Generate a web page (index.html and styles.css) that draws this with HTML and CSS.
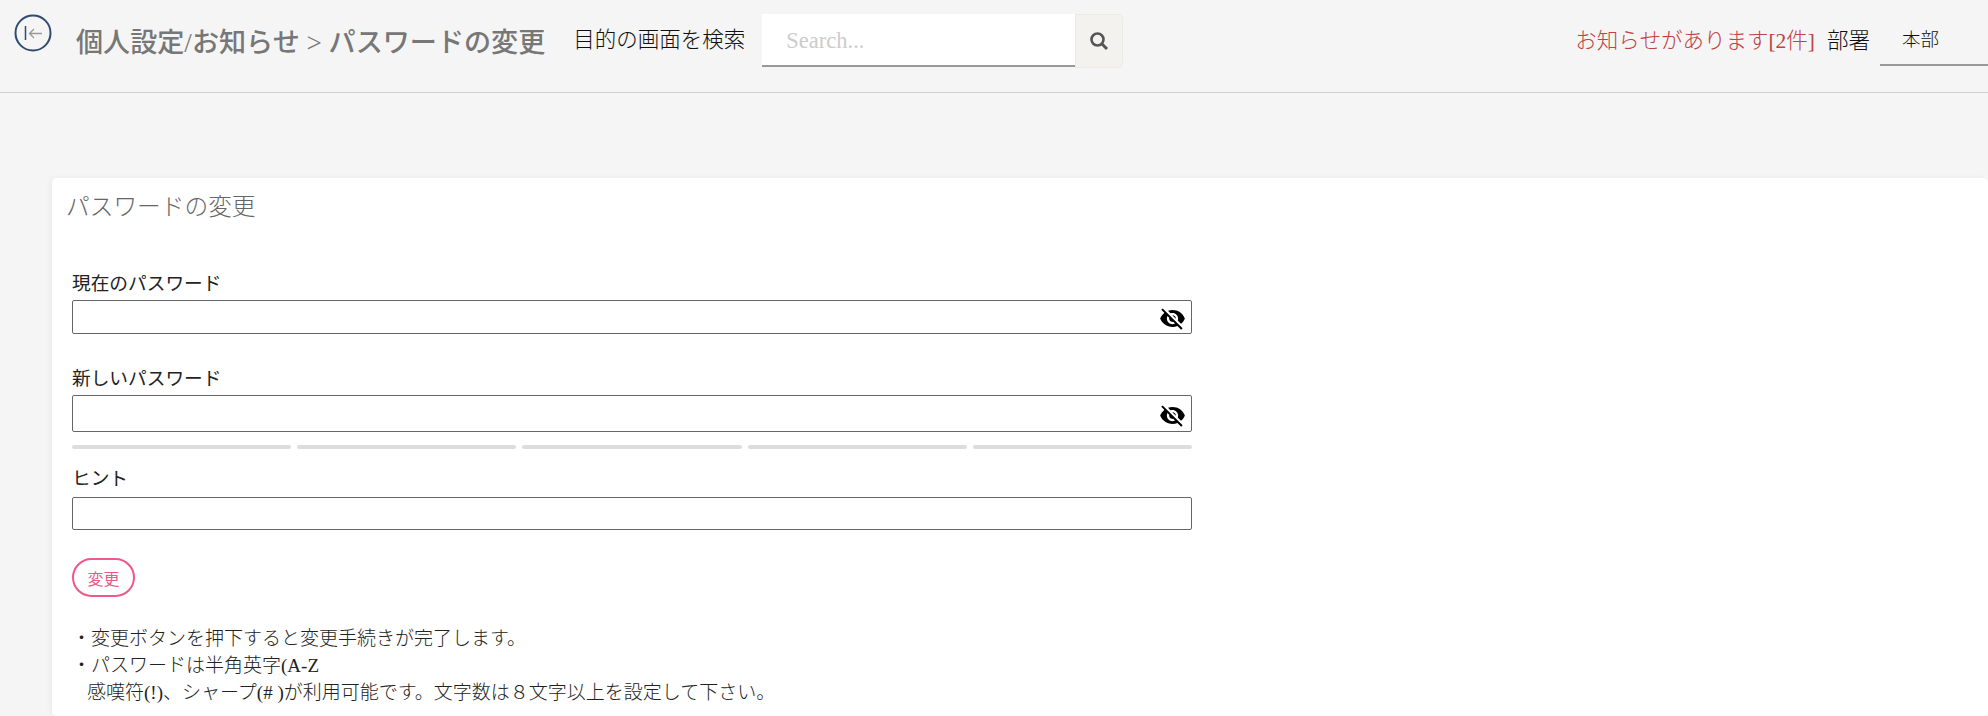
FILE: index.html
```html
<!DOCTYPE html>
<html lang="ja">
<head>
    <meta charset="UTF-8">
    <title>パスワードの変更</title>
    <link rel="stylesheet" href="styles.css">
</head>
<body>
<header class="topbar">
    <a class="back-btn" href="#">
        <svg width="38" height="38" viewBox="0 0 38 38">
            <circle cx="19" cy="19" r="17.5" fill="none" stroke="#2f4b70" stroke-width="2"/>
            <path d="M11.5 12v14" fill="none" stroke="#2f4b70" stroke-width="1.5"/>
            <path d="M28 19.500H15.500M20 15l-4.500 4.500 4.500 4.500" fill="none" stroke="#9a9a9a" stroke-width="1.300"/>
        </svg>
    </a>
    <div class="page-title">個人設定/お知らせ &gt; パスワードの変更</div>
    <div class="search-label">目的の画面を検索</div>
    <div class="search-box">
        <input class="search-input" type="text" placeholder="Search...">
        <button class="search-btn" type="button">
            <svg width="20" height="20" viewBox="0 0 20 20">
                <circle cx="8.500" cy="8.500" r="6" fill="none" stroke="#555" stroke-width="2.600"/>
                <path d="M13 13l5 5" fill="none" stroke="#555" stroke-width="3"/>
            </svg>
        </button>
    </div>
    <div class="topbar-right">
        <span class="notice">お知らせがあります[2件]</span>
        <span class="dept-label">部署</span>
        <div class="dept-select">本部</div>
    </div>
</header>
<main class="card">
    <h2 class="card-title">パスワードの変更</h2>
    <form class="pw-form">
        <label class="field-label">現在のパスワード</label>
        <div class="input-wrap">
            <input class="field h34" type="password">
            <svg class="eye" viewBox="0 0 24 24"><path d="M12 7c2.760 0 5 2.240 5 5 0 .65-.13 1.260-.36 1.830l2.920 2.920c1.510-1.260 2.700-2.890 3.430-4.750-1.730-4.390-6-7.500-11-7.500-1.400 0-2.740.25-3.980.7l2.160 2.160C10.740 7.130 11.350 7 12 7zM2 4.270l2.280 2.280.46.46C3.080 8.300 1.780 10.020 1 12c1.730 4.390 6 7.500 11 7.500 1.550 0 3.030-.3 4.380-.84l.42.42L19.730 22 21 20.730 3.270 3 2 4.270zM7.530 9.800l1.550 1.550c-.05.21-.08.43-.08.65 0 1.660 1.340 3 3 3 .22 0 .44-.03.65-.08l1.550 1.550c-.67.33-1.410.53-2.200.53-2.760 0-5-2.240-5-5 0-.79.2-1.530.53-2.200zm4.310-.78l3.150 3.150.02-.16c0-1.660-1.340-3-3-3l-.17.01z"/></svg>
        </div>
        <label class="field-label second">新しいパスワード</label>
        <div class="input-wrap">
            <input class="field h37" type="password">
            <svg class="eye" viewBox="0 0 24 24"><path d="M12 7c2.760 0 5 2.240 5 5 0 .65-.13 1.260-.36 1.830l2.920 2.920c1.510-1.260 2.700-2.890 3.430-4.750-1.730-4.390-6-7.500-11-7.500-1.400 0-2.740.25-3.980.7l2.160 2.160C10.740 7.130 11.350 7 12 7zM2 4.270l2.280 2.280.46.46C3.080 8.300 1.780 10.020 1 12c1.730 4.390 6 7.500 11 7.500 1.550 0 3.030-.3 4.380-.84l.42.42L19.730 22 21 20.730 3.270 3 2 4.270zM7.530 9.800l1.550 1.550c-.05.21-.08.43-.08.65 0 1.660 1.340 3 3 3 .22 0 .44-.03.65-.08l1.550 1.550c-.67.33-1.410.53-2.200.53-2.760 0-5-2.240-5-5 0-.79.2-1.530.53-2.200zm4.310-.78l3.150 3.150.02-.16c0-1.660-1.340-3-3-3l-.17.01z"/></svg>
        </div>
        <div class="strength">
            <span></span><span></span><span></span><span></span><span></span>
        </div>
        <label class="field-label third">ヒント</label>
        <input class="field h33" type="text">
        <button class="change-btn" type="button">変更</button>
    </form>
    <div class="notes">
        <p>・変更ボタンを押下すると変更手続きが完了します。</p>
        <p>・パスワードは半角英字(A-Z</p>
        <p class="indent">感嘆符(!)、シャープ(# )が利用可能です。文字数は８文字以上を設定して下さい。</p>
    </div>
</main>
</body>
</html>
```

FILE: styles.css
```css
/* General Styles */
html, body {
    height: 100%;
}

body {
    font-family: "Liberation Serif", "Noto Sans CJK JP", serif;
    font-weight: 300;
    margin: 0;
    background-color: #f5f5f5;
    color: #111;
    display: flex;
    flex-direction: column;
    overflow: hidden;
}

/* Top bar */
.topbar {
    height: 92px;
    flex-shrink: 0;
    display: flex;
    align-items: flex-start;
    border-bottom: 1px solid #cfcfcf;
    box-sizing: content-box;
}

.back-btn {
    display: block;
    width: 38px;
    height: 38px;
    margin: 14px 0 0 14px;
}

.page-title {
    margin: 23px 0 0 24px;
    font-size: 27.100px;
    font-weight: 500;
    line-height: 40px;
    color: #777;
    white-space: nowrap;
}

.search-label {
    margin: 20px 0 0 28px;
    font-size: 21.500px;
    line-height: 40px;
    color: #111;
}

.search-box {
    display: flex;
    margin: 14px 0 0 17px;
}

.search-input {
    width: 313px;
    height: 53px;
    box-sizing: border-box;
    padding: 2px 24px 0;
    border: none;
    border-bottom: 2px solid #999;
    background: #fff;
    font-family: inherit;
    font-size: 22.500px;
    outline: none;
}

.search-input::placeholder {
    color: #ccc;
}

.search-btn {
    width: 48px;
    height: 54px;
    padding: 0;
    border: 1px solid #ebebe6;
    border-radius: 0 5px 5px 0;
    background-color: #f3f2ee;
    display: flex;
    align-items: center;
    justify-content: center;
}

.topbar-right {
    margin-left: auto;
    display: flex;
    align-items: flex-start;
}

.notice {
    margin-top: 21px;
    font-size: 21.500px;
    line-height: 40px;
    color: #bf4245;
}

.dept-label {
    margin: 21px 0 0 12px;
    font-size: 21.500px;
    line-height: 40px;
}

.dept-select {
    width: 108px;
    height: 53px;
    margin: 13px 0 0 10px;
    box-sizing: border-box;
    padding: 12px 0 0 22px;
    border-bottom: 2px solid #999;
    font-size: 18.500px;
    line-height: 30px;
}

/* Card */
.card {
    flex: 1;
    margin: 85px 0 0 52px;
    padding: 0 0 0 20px;
    background: #fff;
    border-radius: 5px;
    box-shadow: -2px 0 6px rgba(0, 0, 0, 0.04);
}

.card-title {
    margin: 11px 0 0 -6px;
    font-size: 23.700px;
    font-weight: 300;
    line-height: 36px;
    color: #666;
}

.pw-form {
    width: 1120px;
    display: flex;
    flex-direction: column;
}

.field-label {
    display: block;
    margin-top: 43px;
    font-size: 18.700px;
    font-weight: 400;
    line-height: 32px;
    color: #222;
}

.field-label.second {
    margin-top: 29px;
}

.field-label.third {
    margin-top: 14px;
    margin-bottom: 2px;
}

.input-wrap {
    position: relative;
}

.field {
    display: block;
    width: 100%;
    box-sizing: border-box;
    padding: 0 8px;
    border: 1px solid #666;
    border-radius: 2px;
    background: #fff;
    outline: none;
}

.h34 { height: 34px; }
.h37 { height: 37px; }
.h33 { height: 33px; }

.eye {
    position: absolute;
    right: 6px;
    top: 50%;
    width: 27px;
    height: 27px;
    margin-top: -12px;
    fill: #000;
}

.strength {
    display: flex;
    gap: 6px;
    margin-top: 13px;
}

.strength span {
    flex: 1;
    height: 4px;
    border-radius: 2px;
    background-color: #ddd;
}

.change-btn {
    width: 63px;
    height: 39px;
    margin-top: 28px;
    padding: 0;
    border: 2px solid #f0578a;
    border-radius: 20px;
    background: #fff;
    color: #f0578a;
    font-family: inherit;
    font-size: 16px;
}

.notes {
    margin-top: 28px;
    font-size: 19px;
    line-height: 27px;
    color: #222;
}

.notes p {
    margin: 0;
}

.notes .indent {
    padding-left: 15px;
}
```
